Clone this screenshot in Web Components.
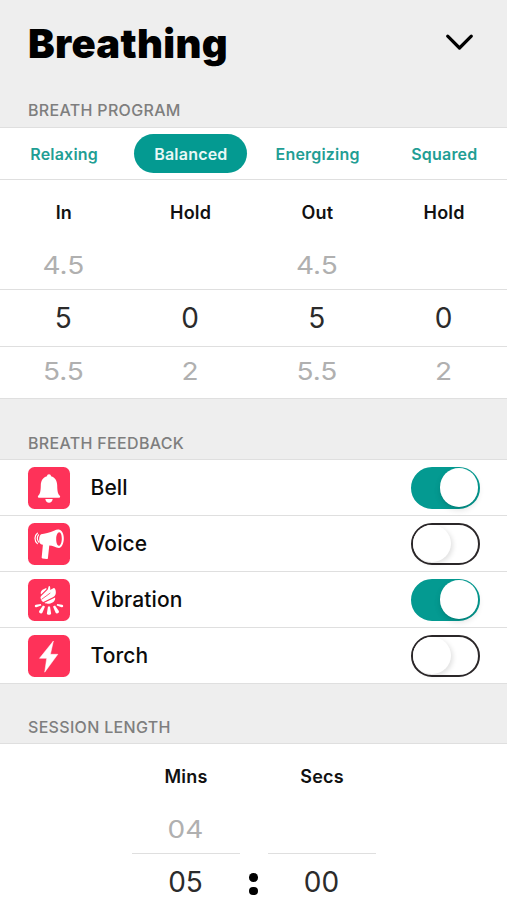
<!DOCTYPE html>
<html lang="en">
<head>
<meta charset="utf-8">
<title>Breathing</title>
<style>
body{margin:0;background:#fff;height:900px;overflow:hidden;font-family:Inter,"Noto Sans",sans-serif;--teal:#049a91;--pink:#fe3259;--line:#dfdfdf;--bg:#eee}
</style>
</head>
<body>
<breathing-app></breathing-app>
<script>
const define = (name, render) => customElements.define(name, class extends HTMLElement {
  constructor() { super(); this.attachShadow({mode: 'open'}); }
  connectedCallback() { this.shadowRoot.innerHTML = render(this); }
});

define('page-header', () => `
<style>
:host{display:flex;justify-content:space-between;align-items:flex-start;height:87px;background:var(--bg);box-sizing:border-box;padding:20px 32px 0 28px}
h1{margin:0;font-size:40px;line-height:48px;font-weight:900;letter-spacing:.3px;color:#000}
svg{display:block;margin-top:8.5px}
</style>
<h1><slot></slot></h1>
<svg width="31" height="26" viewBox="0 0 31 26" fill="none" stroke="#000" stroke-width="3.2" stroke-linecap="round" stroke-linejoin="round"><path d="M3.7 7.2 15.5 19 27.3 7.2"/></svg>`);

define('section-title', () => `
<style>
:host{display:flex;align-items:flex-end;box-sizing:border-box;background:var(--bg);border-bottom:1px solid var(--line);padding:0 28px 6px;font-size:16px;line-height:20px;font-weight:500;letter-spacing:.32px;color:#7e7e7e}
:host(.s1){padding-bottom:7px}
</style><slot></slot>`);

define('tab-bar', () => `
<style>:host{display:grid;grid-template-columns:repeat(4,1fr);align-items:center;justify-items:center;height:52px;box-sizing:border-box;border-bottom:1px solid var(--line);background:#fff}</style><slot></slot>`);

define('tab-item', () => `
<style>
:host{display:flex;align-items:center;justify-content:center;width:113px;height:39px;padding-left:1.5px;box-sizing:border-box;border-radius:20px;font-size:16px;font-weight:600;letter-spacing:.2px;color:#1f9e94}
:host([selected]){background:var(--teal);color:#e9f8f6}
</style><slot></slot>`);

define('picker-column', el => {
  const v = (el.getAttribute('values') || '').split('|');
  return `
<style>
:host{display:block;text-align:center}
div{box-sizing:border-box}
.label{height:62px;line-height:66px;padding-left:1px;font-size:18px;font-weight:600;letter-spacing:.2px;color:#111}
.v{font-size:28px;color:#2b2b2b;height:58px;line-height:56px;border:solid var(--line);border-width:1px 0}
.dim{color:#b0b0b0;border:0;height:47px;line-height:46px}
.dim span{display:block;transform:scaleY(.87)}
.dim.next{height:51px;line-height:49px}
</style>
<div class="label"><slot></slot></div>
<div class="v dim"><span>${v[0]}</span></div>
<div class="v">${v[1]}</div>
<div class="v dim next"><span>${v[2]}</span></div>`;
});

define('picker-group', () => `
<style>
:host{display:grid;grid-template-columns:repeat(4,1fr);background:#fff;border-bottom:1px solid var(--line)}
:host([time]){grid-template-columns:108px 28px 108px;justify-content:center;border:0}
</style><slot></slot>`);

define('time-colon', () => `
<style>
:host{display:flex;flex-direction:column;align-items:center;gap:5px;padding-top:129px}
i{display:block;width:8.6px;height:8.6px;border-radius:50%;background:#000}
</style><i></i><i></i>`);

const ICONS = {
  bell: `<path d="M21 7.2c1.2 0 2 .8 2 2 4.2 1.2 6.1 4.7 6.2 9 .1 6.4.7 8.5 2.6 10.500.7.8.4 2-.7 2H10.900c-1.100 0-1.400-1.200-.7-2 1.900-2 2.500-4.100 2.600-10.500.1-4.300 2-7.800 6.200-9 0-1.200.8-2 2-2Z"/><path d="M17.300 32h7.400c-.3 2.300-1.700 3.700-3.700 3.700s-3.400-1.400-3.700-3.700Z"/>`,
  voice: `<path fill-rule="evenodd" d="M13 11.300C16.500 10.800 22 9.500 26 7.700c2-.9 4-1.400 5.500-.9 3 1 4.500 5 4.300 9.300-.2 4.600-1.900 8.700-4.800 9-1.500.1-3.200-.8-5-1.500-1.500-.6-3-1-4.700-1.100L19.900 35.200c-.1.700-.6 1-1.200.9l-4.100-.6c-.7-.1-1-.6-.9-1.200l1.200-12.500c-1.800 0-3.100-1-3.600-3.300-.5-2.600.1-6 1.700-7.200ZM31.300 9.200c-1.800-.1-3 3-3.100 6.500-.1 3.600.9 6.900 2.600 7 1.700 0 2.900-3.200 3-6.800.1-3.500-.9-6.600-2.500-6.700Z"/><path d="M10.500 11.800c-1.500 2-1.400 5 .3 7.400M9.400 10.200c-3.200 2.200-3.200 7.800 0 10.400" fill="none" stroke="#fff" stroke-width="1.200" stroke-linecap="round"/>`,
  vibration: `<path d="M13 15.600c-.8-2 0-3.700 1.500-4.900l3.100-1.500c1.100-.3 1.200.6.6 1.200Z"/><path d="M12.800 19.800c-.6-1.200-.3-2.100.6-3l5.900-5.700c1-1.100.9-2.400 1.300-3.500.4-.9 1.400-.6 1.500.3l.2 3.200c2.400-1.500 3.700-2.900 4.700-1.400 1.100 1.800 1 4.500.4 6.100-.5 1.300-1.400 1.900-2.500 2.400L15.300 23c-1.300-.5-2.100-1.700-2.500-3.200Z"/><path d="m16.500 23.800 10.600-5.300c.5 2.700-1.500 5.200-4.700 5.900-2.300.5-4.700.4-5.900-.6Z"/><path d="m13.500 20.400 8.800-6.400" fill="none" stroke="var(--pink)" stroke-width=".8"/><path d="M20 27.600h2l1.100 6.700c.1 2-4.300 2-4.200 0Z"/><path d="m15 26.500 2 1.100-2.500 6c-1 1.900-4.300.2-3.300-1.700Z"/><path d="m27 26.500-2 1.100 2.500 6c1 1.900 4.300.2 3.300-1.700Z"/><path d="m12.900 24.900.4 1.700-4.900 1.700c-1.700.5-2.300-2.100-.6-2.500Z"/><path d="m29.100 24.900-.4 1.700 4.900 1.700c1.700.5 2.300-2.100.6-2.500Z"/>`,
  torch: `<path d="M25.400 6 11.500 23.300h7.200L16.700 37.200 29.800 19.300h-7.400Z" stroke="#fff" stroke-width=".5" stroke-linejoin="round"/>`
};

define('feedback-icon', el => `
<style>:host{display:block;width:42px;height:42px;border-radius:6.5px;background:var(--pink)}svg{display:block}</style>
<svg width="42" height="42" viewBox="0 0 42 42" fill="#fff">${ICONS[el.getAttribute('name')]}</svg>`);

define('toggle-switch', () => `
<style>
:host{display:flex;justify-content:flex-start;align-items:center;width:69px;height:42px;box-sizing:border-box;border:2px solid #2b2729;border-radius:21px;background:#fff}
i{display:block;width:37.6px;height:37.6px;border-radius:50%;background:#fff;box-shadow:2px 2px 5px rgba(0,0,0,.12);flex:none}
:host([on]) i{width:38.5px;height:38.5px;box-shadow:0 3px 6px rgba(0,0,0,.12),0 1px 1px rgba(0,0,0,.08)}
:host([on]){justify-content:flex-end;background:var(--teal);border-color:var(--teal)}
</style><i></i>`);

define('feedback-row', el => `
<style>
:host{display:flex;align-items:center;height:56px;box-sizing:border-box;padding:0 27px 0 28px;background:#fff;border-bottom:1px solid var(--line)}
.t{flex:1;padding-left:20.5px;font-size:21px;font-weight:500;letter-spacing:.12px;color:#0c0c0c}
</style>
<feedback-icon name="${el.getAttribute('icon')}"></feedback-icon><span class="t"><slot></slot></span><toggle-switch ${el.hasAttribute('on') ? 'on' : ''}></toggle-switch>`);

define('breathing-app', () => `
<style>
:host{display:block;height:900px;overflow:hidden}
.s1{height:41px}.s2{height:61px}.s3{height:60px}
</style>
<page-header>Breathing</page-header>
<section-title class="s1">BREATH PROGRAM</section-title>
<tab-bar><tab-item>Relaxing</tab-item><tab-item selected>Balanced</tab-item><tab-item>Energizing</tab-item><tab-item>Squared</tab-item></tab-bar>
<picker-group>
<picker-column values="4.5|5|5.5">In</picker-column>
<picker-column values="|0|2">Hold</picker-column>
<picker-column values="4.5|5|5.5">Out</picker-column>
<picker-column values="|0|2">Hold</picker-column>
</picker-group>
<section-title class="s2">BREATH FEEDBACK</section-title>
<feedback-row icon="bell" on>Bell</feedback-row>
<feedback-row icon="voice">Voice</feedback-row>
<feedback-row icon="vibration" on>Vibration</feedback-row>
<feedback-row icon="torch">Torch</feedback-row>
<section-title class="s3">SESSION LENGTH</section-title>
<picker-group time>
<picker-column values="04|05|">Mins</picker-column><time-colon></time-colon><picker-column values="|00|">Secs</picker-column>
</picker-group>`);
</script>
</body>
</html>
